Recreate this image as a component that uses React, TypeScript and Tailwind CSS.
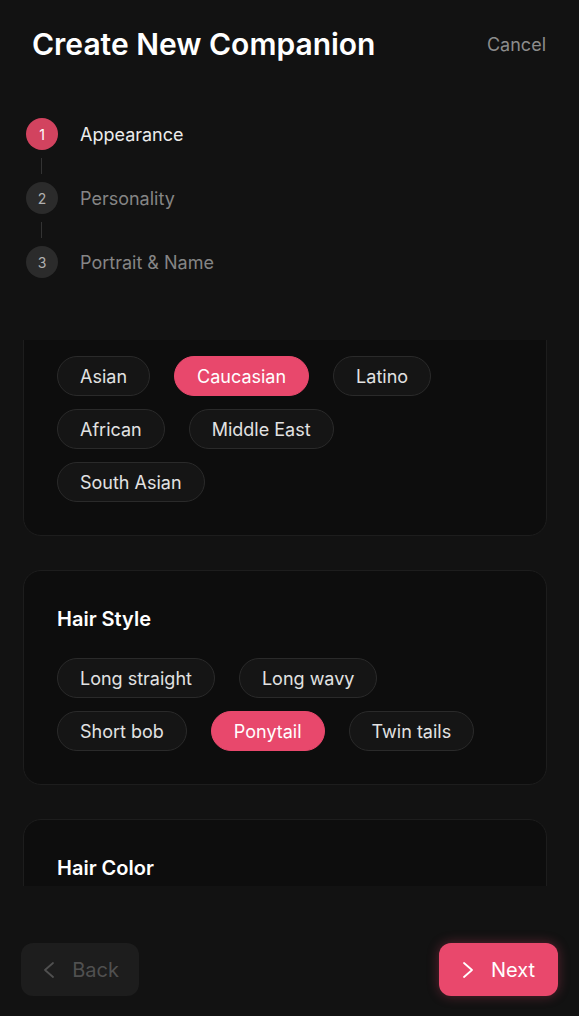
const STEPS = ["Appearance", "Personality", "Portrait & Name"];

const SECTIONS = [
  {
    title: "Ethnicity",
    options: ["Asian", "Caucasian", "Latino", "African", "Middle East", "South Asian"],
    selected: "Caucasian",
  },
  {
    title: "Hair Style",
    options: ["Long straight", "Long wavy", "Short bob", "Ponytail", "Twin tails"],
    selected: "Ponytail",
  },
  {
    title: "Hair Color",
    options: ["Black", "Brown", "Blonde", "Red", "Pink", "Silver"],
    selected: "Black",
  },
];

function Chevron({ dir }: { dir: "left" | "right" }) {
  return (
    <svg width="12" height="16" viewBox="0 0 12 16" fill="none">
      <polyline
        points={dir === "left" ? "10,1 2,8 10,15" : "2,1 10,8 2,15"}
        stroke="currentColor"
        strokeWidth="1.8"
        strokeLinecap="round"
        strokeLinejoin="round"
      />
    </svg>
  );
}

function Chip({ label, active }: { label: string; active: boolean }) {
  return (
    <button
      className={
        active
          ? "h-[40px] rounded-full border border-[#e8486c] bg-[#e8486c] px-[22px] text-[18px] text-white"
          : "h-[40px] rounded-full border border-[#2a2a2a] bg-[#151515] px-[22px] text-[18px] text-[#e2e2e2]"
      }
    >
      {label}
    </button>
  );
}

function Section({
  title,
  options,
  selected,
}: {
  title: string;
  options: string[];
  selected: string;
}) {
  return (
    <section className="rounded-[18px] border border-[#1d1d1d] bg-[#0d0d0d] px-[33px] pt-[35px] pb-[33px]">
      <h3 className="text-[20px] leading-[26px] font-semibold text-white">{title}</h3>
      <div className="mt-[26px] flex flex-wrap gap-x-[24px] gap-y-[13px] pr-[26px]">
        {options.map((o) => (
          <Chip key={o} label={o} active={o === selected} />
        ))}
      </div>
    </section>
  );
}

export default function App() {
  return (
    <div
      className="flex h-[1016px] w-full flex-col overflow-hidden bg-[#121212]"
      style={{ fontFamily: "Inter, 'Noto Sans', sans-serif" }}
    >
      {/* 헤더 */}
      <header className="flex items-center justify-between pt-[24px] pr-[33px] pl-[32px]">
        <h1 className="text-[30px] leading-[40px] font-semibold text-white">
          Create New Companion
        </h1>
        <button className="text-[18px] text-[#8c8c8c]">Cancel</button>
      </header>

      {/* 단계 표시 */}
      <ol className="mt-[54px] flex flex-col pl-[26px]">
        {STEPS.map((step, i) => (
          <li key={step} className="flex flex-col">
            <div className="flex items-center gap-[22px]">
              <span
                className={
                  i === 0
                    ? "flex h-[32px] w-[32px] items-center justify-center rounded-full bg-[#d2435f] text-[14px] text-white"
                    : "flex h-[32px] w-[32px] items-center justify-center rounded-full bg-[#2b2b2b] text-[14px] text-[#b0b0b0]"
                }
              >
                {i + 1}
              </span>
              <span
                className={
                  i === 0 ? "text-[18px] text-[#ececec]" : "text-[18px] text-[#858585]"
                }
              >
                {step}
              </span>
            </div>
            {i < STEPS.length - 1 && (
              <div className="my-[8px] ml-[15px] h-[16px] w-px bg-[#333333]" />
            )}
          </li>
        ))}
      </ol>

      {/* 옵션 목록 (스크롤 영역) */}
      <div className="mt-[62px] h-[546px] overflow-hidden pr-[32px] pl-[23px]">
        <div className="-mt-[72px] flex flex-col gap-[34px]">
          {SECTIONS.map((s) => (
            <Section key={s.title} {...s} />
          ))}
        </div>
      </div>

      {/* 하단 버튼 */}
      <footer className="mt-auto flex items-center justify-between px-[21px] pb-[20px]">
        <button className="flex h-[53px] w-[118px] items-center justify-center gap-[17px] rounded-[12px] bg-[#1d1d1d] pl-[2px] text-[20px] text-[#505050]">
          <Chevron dir="left" />
          Back
        </button>
        <button className="flex h-[53px] w-[119px] items-center justify-center gap-[17px] rounded-[12px] bg-[#e9486c] text-[20px] text-white shadow-[0_0_12px_rgba(233,72,108,0.35)]">
          <Chevron dir="right" />
          Next
        </button>
      </footer>
    </div>
  );
}
